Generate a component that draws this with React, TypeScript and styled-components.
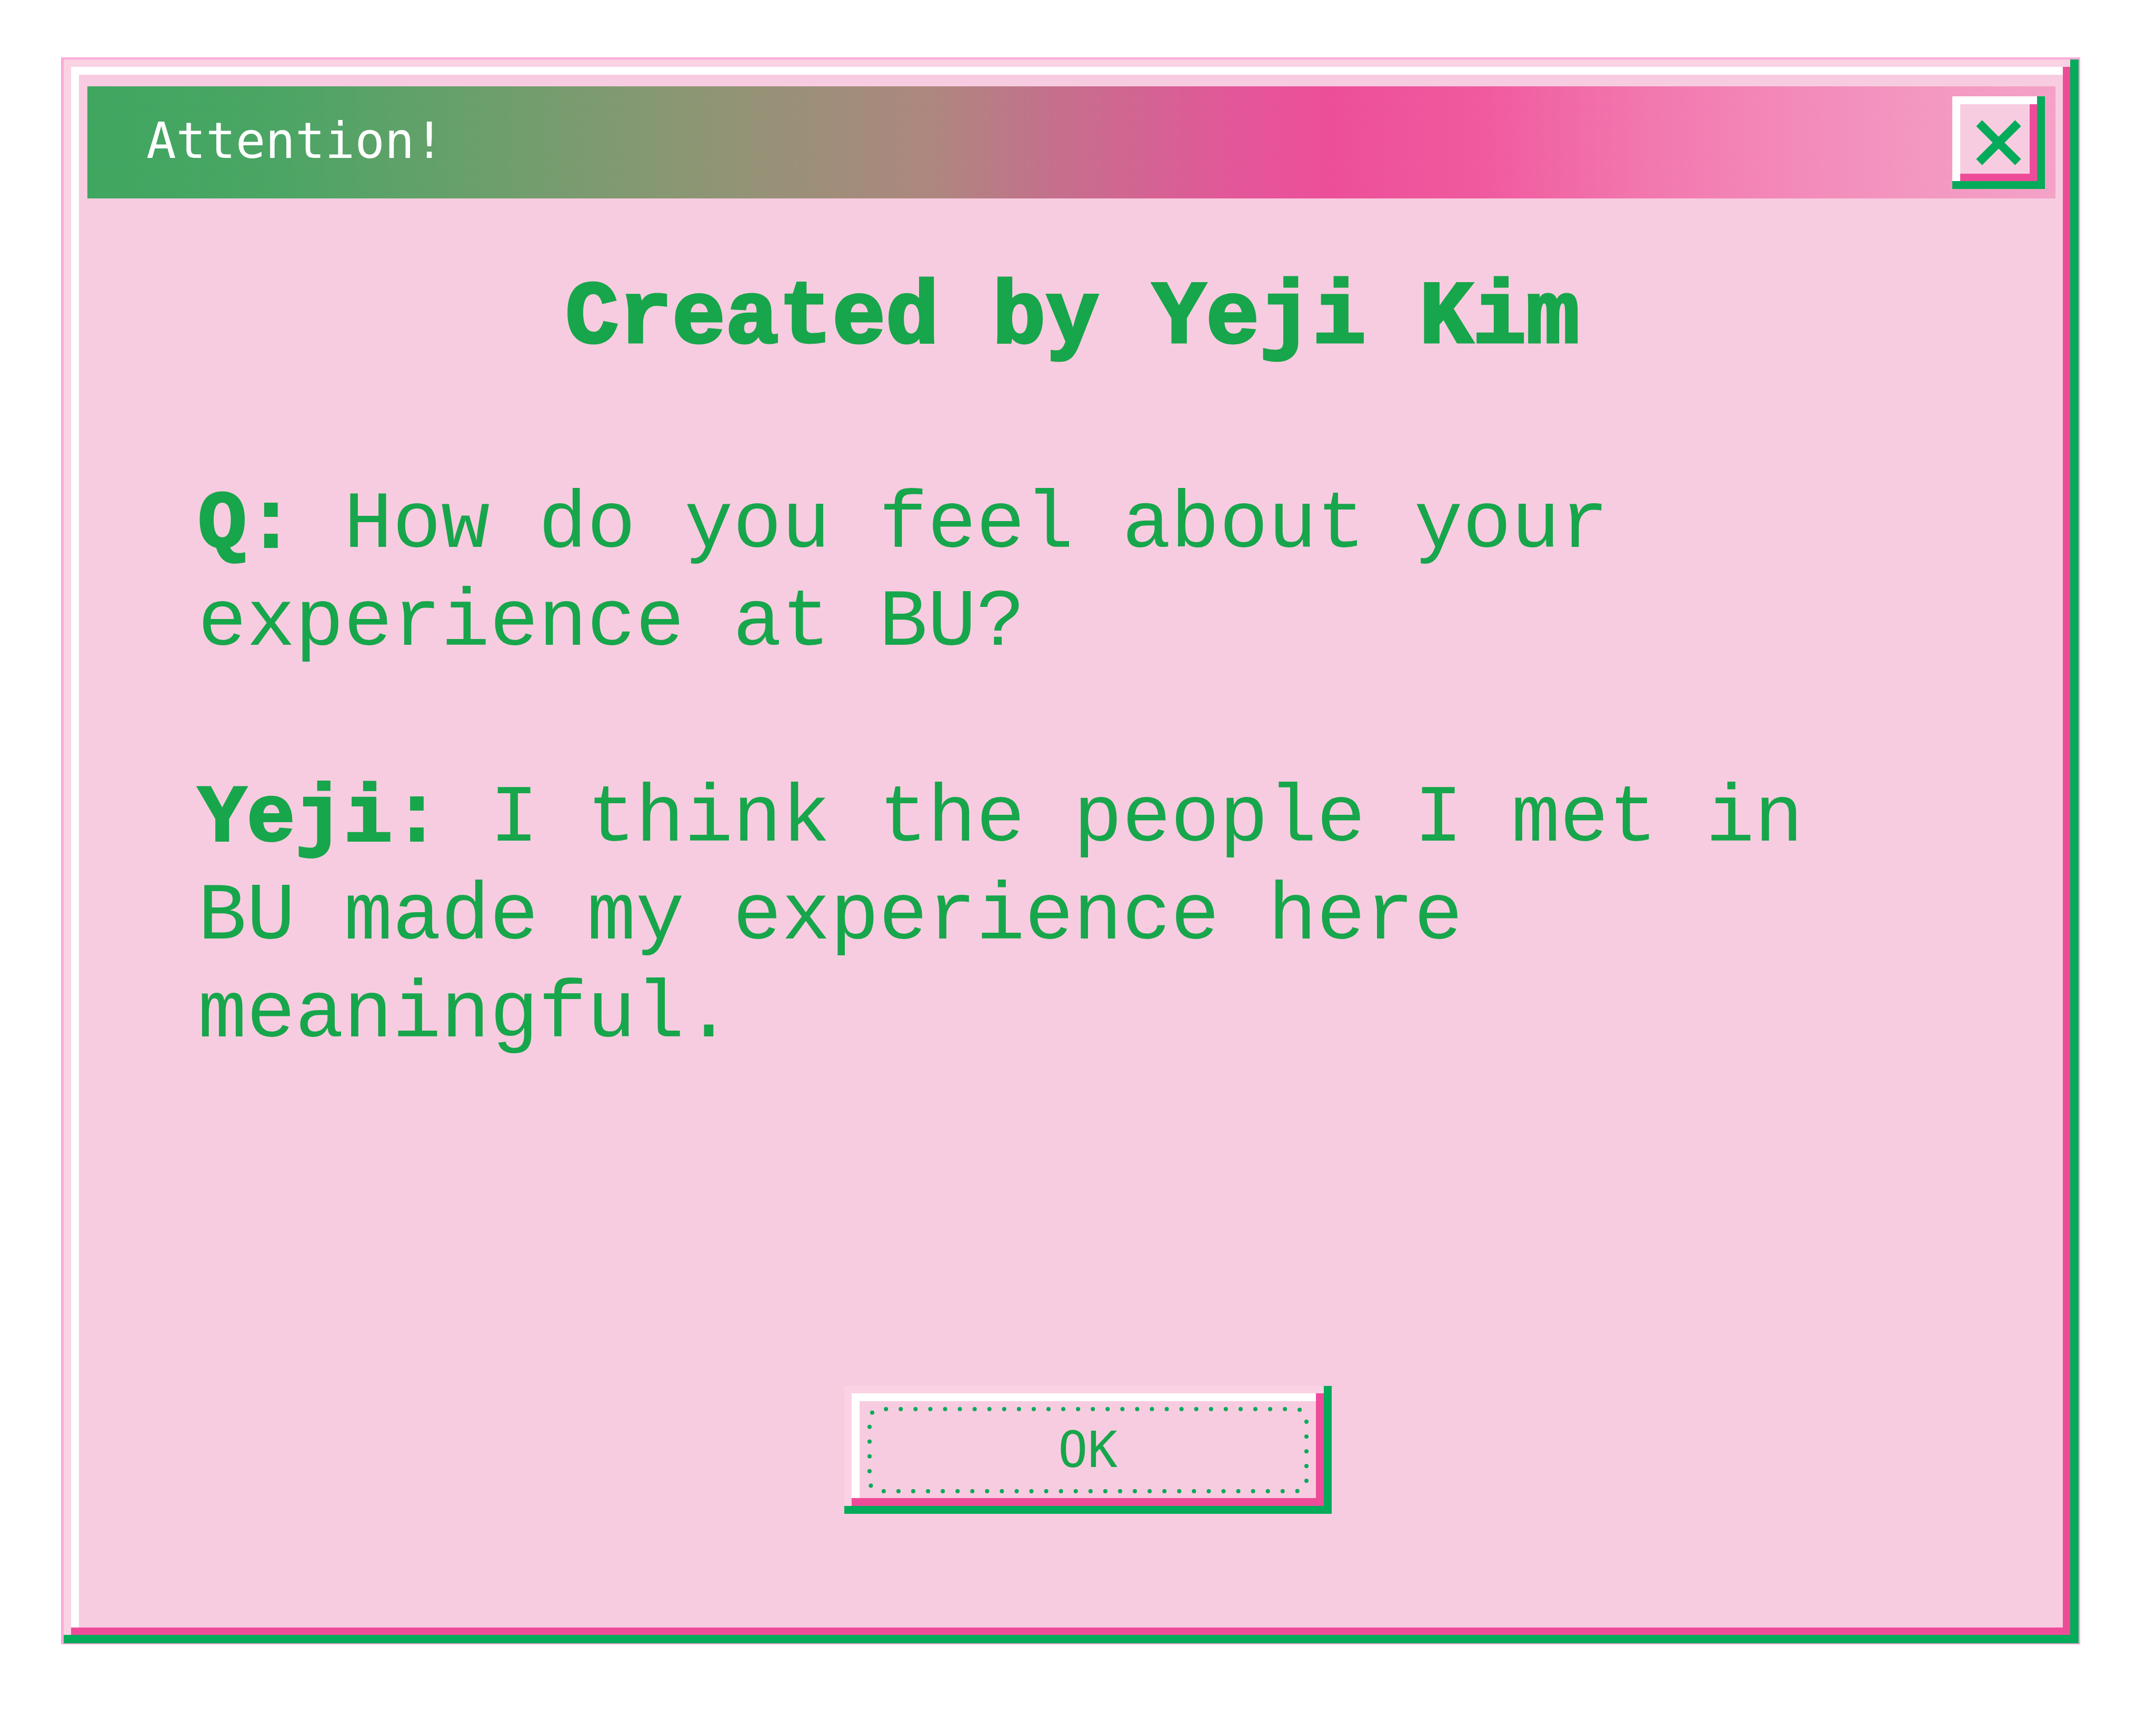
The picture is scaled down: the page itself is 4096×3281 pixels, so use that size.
import React from "react";
import styled, { createGlobalStyle } from "styled-components";

const color = {
  face: "#f8cce0",
  edge: "#fad2e3",
  white: "#ffffff",
  pink: "#ee4c99",
  green: "#04ab5a",
  text: "#17a64b",
  outline: "#fbaad9",
};

const GlobalStyle = createGlobalStyle`
  *, *::before, *::after { box-sizing: border-box; }
  body { margin: 0; background: ${color.white}; }
`;

const uiFont = `"DejaVu Sans Mono", monospace`;
const bodyFont = `"Liberation Mono", monospace`;

const Desktop = styled.main`
  display: flex;
  min-height: 100vh;
  padding: 109px 144px 157px 116px;
`;

const Dialog = styled.section`
  flex: 1;
  display: flex;
  flex-direction: column;
  padding: 51px 44px 0 45px;
  border: solid ${color.outline};
  border-width: 4px 3px 2px 5px;
  background: ${color.face};
  box-shadow:
    inset -16px -16px 0 ${color.green},
    inset 14px 14px 0 ${color.edge},
    inset -30px -30px 0 ${color.pink},
    inset 29px 29px 0 ${color.white};
`;

const TitleBar = styled.header`
  display: flex;
  align-items: center;
  justify-content: space-between;
  height: 213px;
  padding: 0 20px 0 112px;
  background: linear-gradient(
    90deg,
    #3fa660 0%,
    #4ca564 10%,
    #6b9f6c 20%,
    #8a9773 30%,
    #ae877f 43%,
    #c4708c 49%,
    #e5559a 59%,
    #ec4f98 63%,
    #f05a9f 71%,
    #f277ae 79%,
    #f388b8 86%,
    #f397c0 93%,
    #f4a2c7 100%
  );
`;

const Title = styled.h1`
  margin: 0;
  padding-bottom: 6px;
  font: 400 94px/120px ${uiFont};
  color: ${color.white};
`;

const CloseButton = styled.button`
  display: grid;
  place-items: center;
  width: 176px;
  height: 176px;
  padding: 0;
  border: 0;
  background: ${color.face};
  box-shadow:
    inset -15px -15px 0 ${color.green},
    inset 15px 15px 0 ${color.white},
    inset -29px -29px 0 ${color.pink};
`;

const CloseIcon = styled.svg`
  width: 88px;
  height: 88px;
  fill: none;
  stroke: ${color.green};
  stroke-width: 16;
`;

const Content = styled.div`
  flex: 1;
  display: flex;
  flex-direction: column;
  padding: 132px 206px 0 210px;
  color: ${color.text};
`;

const Heading = styled.h2`
  margin: 0 0 204px;
  font: 700 169px/192px ${bodyFont};
  text-align: center;
  -webkit-text-stroke: 5px ${color.text};
`;

const Paragraph = styled.p`
  max-width: 3200px;
  margin: 0 0 186px;
  font: 400 154px/186px ${bodyFont};
`;

const Speaker = styled.b`
  -webkit-text-stroke: 4px ${color.text};
`;

const Actions = styled.footer`
  display: flex;
  justify-content: center;
  padding: 0 0 246px 62px;
`;

const OkButton = styled.button`
  display: grid;
  width: 926px;
  height: 243px;
  padding: 40px 44px;
  border: 0;
  background: ${color.face};
  color: ${color.text};
  font: 400 94px/120px ${uiFont};
  box-shadow:
    inset -15px -15px 0 ${color.green},
    inset 14px 14px 0 ${color.edge},
    inset -30px -30px 0 ${color.pink},
    inset 29px 29px 0 ${color.white};

  > * {
    grid-area: 1 / 1;
    place-self: center;
  }
`;

const FocusRing = styled.svg`
  width: 838px;
  height: 164px;
  overflow: visible;
  fill: none;
  stroke: ${color.green};
  stroke-width: 8;
  stroke-linecap: round;
`;

export default function App() {
  return (
    <>
      <GlobalStyle />
      <Desktop>
        <Dialog role="dialog" aria-labelledby="dialog-title">
          <TitleBar>
            <Title id="dialog-title">Attention!</Title>
            <CloseButton type="button" aria-label="Close">
              <CloseIcon viewBox="0 0 88 88" aria-hidden="true">
                <path d="M7 7 81 81M81 7 7 81" />
              </CloseIcon>
            </CloseButton>
          </TitleBar>
          <Content>
            <Heading>Created by Yeji Kim</Heading>
            <Paragraph>
              <Speaker>Q:</Speaker> How do you feel about your experience at BU?
            </Paragraph>
            <Paragraph>
              <Speaker>Yeji:</Speaker> I think the people I met in BU made my
              experience here meaningful.
            </Paragraph>
          </Content>
          <Actions>
            <OkButton type="button">
              <FocusRing viewBox="0 0 838 164" aria-hidden="true">
                <rect
                  x="4"
                  y="4"
                  width="830"
                  height="156"
                  rx="20"
                  pathLength={690}
                  strokeDasharray="0 10"
                  strokeDashoffset={-4}
                />
              </FocusRing>
              <span>OK</span>
            </OkButton>
          </Actions>
        </Dialog>
      </Desktop>
    </>
  );
}
